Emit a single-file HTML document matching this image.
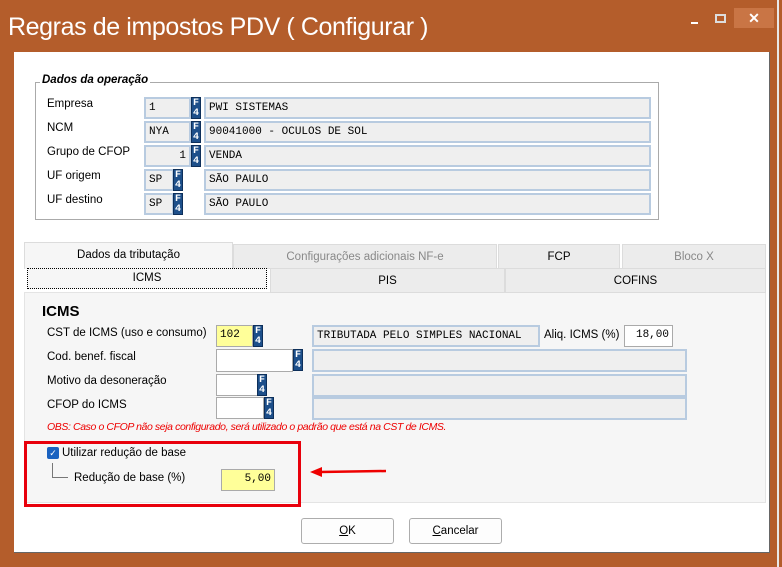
<!DOCTYPE html>
<html><head><meta charset="utf-8"><style>
*{box-sizing:border-box;margin:0;padding:0}
body{width:782px;height:567px;background:#b45d2b;position:relative;overflow:hidden;font-family:"Liberation Sans",sans-serif;font-size:11.5px;color:#000}
.a{position:absolute}
.title{left:8px;top:13px;font-size:25px;color:#fff;font-weight:300;letter-spacing:-0.4px}
.client{left:14px;top:52px;width:756px;height:501px;background:#fff;border-right:1px solid #666;border-bottom:1px solid #666}
.fld{position:absolute;background:#efefef;border:2px solid #b8cbe0;font-family:"Liberation Mono",monospace;font-size:11px;padding:2px 3px;line-height:15px;white-space:nowrap;overflow:hidden}
.wh{background:#fff;border:1px solid #aaa}
.yl{background:#ffff99;border:1px solid #aaa}
.f4{position:absolute;width:10px;height:22px;background:#1d4f8a;color:#fff;font:bold 10px/10px "Liberation Mono",monospace;text-align:center;padding-top:1px;border:1px solid #0d2f5a}
.lb{position:absolute;font-size:11.5px;white-space:nowrap}
.tab{position:absolute;background:#ececec;border:1px solid #dcdcdc;text-align:center;font-size:11.5px;line-height:24px;color:#000}
.btn{position:absolute;background:#fdfdfd;border:1px solid #adadad;border-radius:3px;text-align:center;line-height:24px;font-size:11.5px}
</style></head><body>
<div class="a title">Regras de impostos PDV ( Configurar )</div>
<div class="a" style="left:691px;top:22px;width:7px;height:2px;background:#fff"></div>
<div class="a" style="left:715px;top:14px;width:11px;height:9px;border:2px solid #ddd"></div>
<div class="a" style="left:734px;top:8px;width:40px;height:20px;background:#c97545;color:#fff;font:bold 14px/20px 'Liberation Sans';text-align:center">✕</div>
<div class="a" style="left:777px;top:0;width:2px;height:567px;background:#e8e8e8"></div>
<div class="a client"></div>

<div class="a" style="left:35px;top:82px;width:624px;height:138px;border:1px solid #aaa"></div>
<div class="a" style="left:40px;top:74px;background:#fff;padding:0 2px;font-weight:bold;font-style:italic;font-size:11.5px">Dados da operação</div>

<div class="lb" style="left:47px;top:98px">Empresa</div>
<div class="fld" style="left:144px;top:97px;width:47px;height:22px">1</div><div class="f4" style="left:191px;top:97px">F<br>4</div>
<div class="fld" style="left:204px;top:97px;width:447px;height:22px">PWI SISTEMAS</div>
<div class="lb" style="left:47px;top:122px">NCM</div>
<div class="fld" style="left:144px;top:121px;width:47px;height:22px">NYA</div><div class="f4" style="left:191px;top:121px">F<br>4</div>
<div class="fld" style="left:204px;top:121px;width:447px;height:22px">90041000 - OCULOS DE SOL</div>
<div class="lb" style="left:47px;top:146px">Grupo de CFOP</div>
<div class="fld" style="left:144px;top:145px;width:47px;height:22px;text-align:right">1</div><div class="f4" style="left:191px;top:145px">F<br>4</div>
<div class="fld" style="left:204px;top:145px;width:447px;height:22px">VENDA</div>
<div class="lb" style="left:47px;top:170px">UF origem</div>
<div class="fld" style="left:144px;top:169px;width:30px;height:22px">SP</div><div class="f4" style="left:173px;top:169px">F<br>4</div>
<div class="fld" style="left:204px;top:169px;width:447px;height:22px">SÃO PAULO</div>
<div class="lb" style="left:47px;top:194px">UF destino</div>
<div class="fld" style="left:144px;top:193px;width:30px;height:22px">SP</div><div class="f4" style="left:173px;top:193px">F<br>4</div>
<div class="fld" style="left:204px;top:193px;width:447px;height:22px">SÃO PAULO</div>

<div class="a" style="left:24px;top:292px;width:742px;height:211px;background:#f6f6f6;border:1px solid #e4e4e4"></div>
<div class="tab" style="left:24px;top:242px;width:209px;height:27px;background:#f6f6f6;border-bottom:none">Dados da tributação</div>
<div class="tab" style="left:233px;top:244px;width:264px;height:25px;color:#888">Configurações adicionais NF-e</div>
<div class="tab" style="left:498px;top:244px;width:122px;height:25px">FCP</div>
<div class="tab" style="left:622px;top:244px;width:144px;height:25px;color:#888">Bloco X</div>
<div class="tab" style="left:27px;top:268px;width:240px;height:21px;background:#f6f6f6;border:1px dotted #000;line-height:19px">ICMS</div>
<div class="tab" style="left:270px;top:268px;width:235px;height:25px">PIS</div>
<div class="tab" style="left:505px;top:268px;width:261px;height:25px">COFINS</div>

<div class="lb" style="left:42px;top:303px;font-size:15px;font-weight:bold">ICMS</div>
<div class="lb" style="left:47px;top:327px">CST de ICMS (uso e consumo)</div>
<div class="fld yl" style="left:216px;top:325px;width:37px;height:22px">102</div><div class="f4" style="left:253px;top:325px">F<br>4</div>
<div class="fld" style="left:312px;top:325px;width:228px;height:22px">TRIBUTADA PELO SIMPLES NACIONAL</div>
<div class="lb" style="left:544px;top:329px">Aliq. ICMS (%)</div>
<div class="fld wh" style="left:624px;top:325px;width:49px;height:22px;text-align:right">18,00</div>
<div class="lb" style="left:47px;top:351px">Cod. benef. fiscal</div>
<div class="fld wh" style="left:216px;top:349px;width:77px;height:23px"></div><div class="f4" style="left:293px;top:349px">F<br>4</div>
<div class="fld" style="left:312px;top:349px;width:375px;height:23px"></div>
<div class="lb" style="left:47px;top:375px">Motivo da desoneração</div>
<div class="fld wh" style="left:216px;top:374px;width:42px;height:22px"></div><div class="f4" style="left:257px;top:374px">F<br>4</div>
<div class="fld" style="left:312px;top:374px;width:375px;height:23px"></div>
<div class="lb" style="left:47px;top:399px">CFOP do ICMS</div>
<div class="fld wh" style="left:216px;top:397px;width:48px;height:22px"></div><div class="f4" style="left:264px;top:397px">F<br>4</div>
<div class="fld" style="left:312px;top:397px;width:375px;height:23px"></div>
<div class="lb" style="left:47px;top:421px;color:#e00;font-style:italic;font-size:10.5px;letter-spacing:-0.4px">OBS: Caso o CFOP não seja configurado, será utilizado o padrão que está na CST de ICMS.</div>

<div class="a" style="left:24px;top:441px;width:277px;height:66px;border:3px solid #e8000c"></div>
<div class="a" style="left:47px;top:447px;width:12px;height:12px;background:#1a62c0;border-radius:2px;color:#fff;font-size:9px;line-height:12px;text-align:center">✓</div>
<div class="lb" style="left:62px;top:447px">Utilizar redução de base</div>
<div class="a" style="left:52px;top:463px;width:1px;height:15px;background:#777"></div>
<div class="a" style="left:52px;top:477px;width:16px;height:1px;background:#777"></div>
<div class="lb" style="left:74px;top:472px">Redução de base (%)</div>
<div class="fld yl" style="left:221px;top:469px;width:54px;height:22px;text-align:right">5,00</div>
<svg class="a" style="left:308px;top:465px" width="80" height="14"><line x1="12" y1="7" x2="78" y2="6" stroke="#e00" stroke-width="2.5"/><polygon points="2,7 14,2 14,12" fill="#e00"/></svg>

<div class="btn" style="left:301px;top:518px;width:93px;height:26px"><u>O</u>K</div>
<div class="btn" style="left:409px;top:518px;width:93px;height:26px"><u>C</u>ancelar</div>
</body></html>
